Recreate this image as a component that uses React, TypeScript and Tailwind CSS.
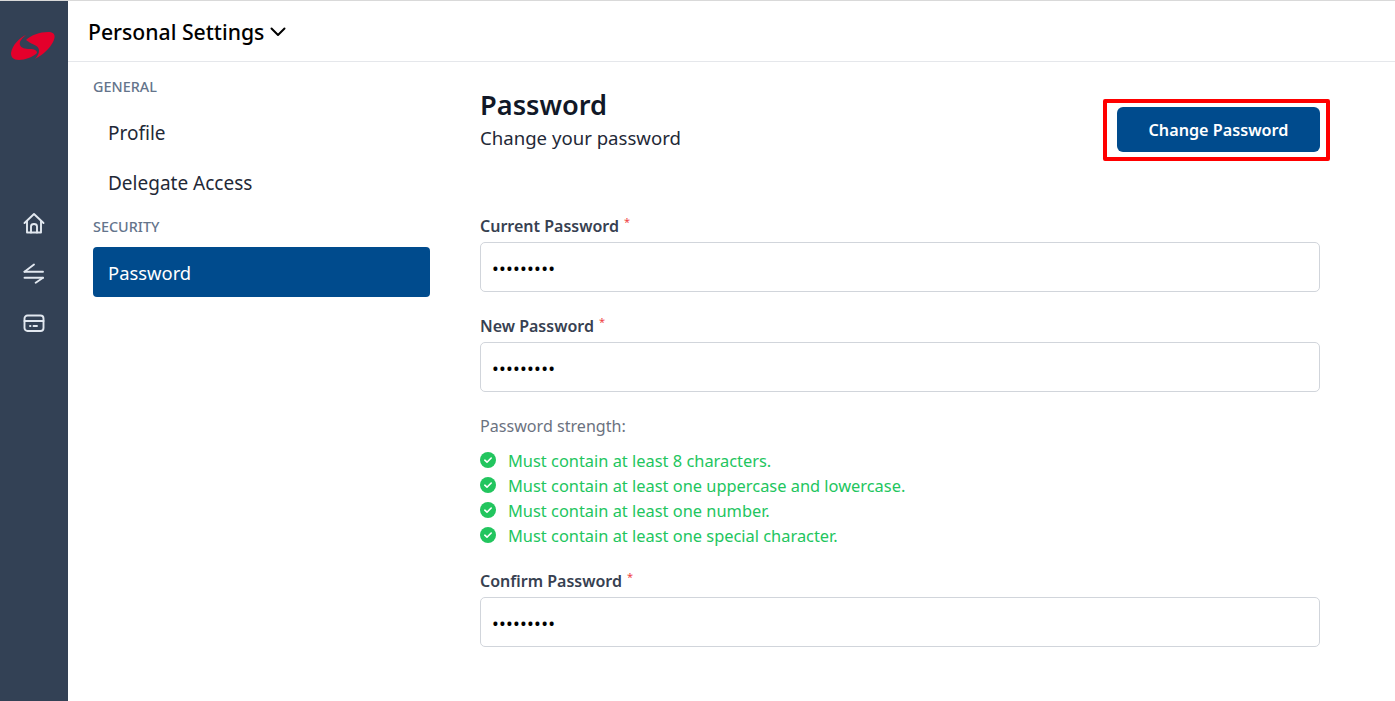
const rules = [
  'Must contain at least 8 characters.',
  'Must contain at least one uppercase and lowercase.',
  'Must contain at least one number.',
  'Must contain at least one special character.',
];

function Logo() {
  return (
    <svg width="44" height="28" viewBox="0 0 44 28" fill="#e4002b">
      <path d="M0 21C1.5 13 8 6 15 3C10 7 8 10 9 13C10 16 14 17 19 17C23 17 26 18 26 21C22 25 14 28 8 28C2 28 0 25 0 21Z" />
      <path d="M15 8C20 3 29 0 37 0C44 0 45 4 42 10C39 16 32 23 24 27C28 23 29 18 27 15.5C25 13 20 12 15 8Z" />
    </svg>
  );
}

function SideIcons() {
  return (
    <div className="mt-[152px] flex flex-col items-center gap-[28px] text-[#e2e8f0]">
      <svg width="22" height="22" viewBox="0 0 22 22" fill="none" stroke="currentColor" strokeWidth="1.9" strokeLinecap="round" strokeLinejoin="round">
        <path d="M1.5 11L11 2L20.5 11" />
        <path d="M4 9V20.5H18V9" />
        <path d="M8 20.5V14.5C8 12.8 9.3 12 11 12C12.7 12 14 12.8 14 14.5V20.5" />
      </svg>
      <svg width="22" height="22" viewBox="0 0 22 22" fill="none" stroke="currentColor" strokeWidth="1.9" strokeLinecap="round" strokeLinejoin="round">
        <path d="M1.5 9.7H20" />
        <path d="M1.5 9.7L11 2.5" />
        <path d="M20 15.7H1.5" />
        <path d="M20 15.7L12.7 20.7" />
      </svg>
      <svg width="22" height="22" viewBox="0 0 22 22" fill="none" stroke="currentColor" strokeWidth="1.9" strokeLinecap="round" strokeLinejoin="round">
        <rect x="1.5" y="3.5" width="19" height="15.5" rx="3" />
        <path d="M1.5 9H20.5" />
        <path d="M7 14H7.5" />
        <path d="M10.5 14H14" />
      </svg>
    </div>
  );
}

function PasswordField({ label }: { label: string }) {
  return (
    <div>
      <div className="flex h-[24px] items-center text-[16px] font-semibold leading-6 text-[#374151]">
        {label}
        <span className="mb-2 ml-[5px] text-[11px] font-normal leading-3 text-[#ef4444]">*</span>
      </div>
      <div className="mt-[4px] flex h-[50px] items-center rounded-[5px] border border-[#d1d5db] bg-white pl-[11px] pt-[2px] text-[18px] tracking-[0.25px] text-black">
        {'•••••••••'}
      </div>
    </div>
  );
}

function CheckDot() {
  return (
    <svg width="16" height="16" viewBox="0 0 16 16" className="shrink-0 -translate-y-[2px]">
      <circle cx="8" cy="8" r="8" fill="#22c55e" />
      <path d="M4.8 8.2L7 10.2L11.2 6" fill="none" stroke="white" strokeWidth="1.6" strokeLinecap="round" strokeLinejoin="round" />
    </svg>
  );
}

export default function App() {
  return (
    <div className="flex h-[701px] w-[1395px] overflow-hidden border-t border-[#d9d9d9] bg-white font-['Noto_Sans','Open_Sans',sans-serif] text-[#111827]">
      <aside className="flex w-[68px] shrink-0 flex-col items-center bg-[#334155]">
        <div className="ml-[-2px] mt-[31px] h-[28px]">
          <Logo />
        </div>
        <SideIcons />
      </aside>

      <div className="flex min-w-0 flex-1 flex-col">
        <header className="flex h-[61px] shrink-0 items-center gap-[6px] border-b border-[#e5e7eb] pl-[20px] pt-[1px] text-[21.2px] font-medium text-black">
          Personal Settings
          <svg width="16" height="10" viewBox="0 0 16 10" fill="none" stroke="currentColor" strokeWidth="2" strokeLinecap="round" strokeLinejoin="round">
            <path d="M1.5 1.5L8 8L14.5 1.5" />
          </svg>
        </header>

        <div className="flex flex-1">
          <nav className="ml-[25px] w-[337px] shrink-0 pt-[13px]">
            <div className="flex h-[24px] items-center text-[14.4px] font-medium text-[#64748b]">GENERAL</div>
            <div className="mt-[9px] flex h-[50px] items-center pl-[15px] text-[19px] text-[#1f2937]">Profile</div>
            <div className="flex h-[50px] items-center pl-[15px] text-[19px] text-[#1f2937]">Delegate Access</div>
            <div className="mt-[7px] flex h-[24px] items-center text-[14.4px] font-medium text-[#64748b]">SECURITY</div>
            <div className="mt-[8px] flex h-[50px] items-center rounded-[4px] bg-[#004b8d] pl-[15px] pt-[1px] text-[18.4px] text-white">Password</div>
          </nav>

          <main className="ml-[50px] w-[840px] shrink-0">
            <div className="flex h-[152px] items-start justify-between">
              <div className="pt-[26px]">
                <h1 className="text-[27.2px] font-semibold leading-[34px] text-[#111827]">Password</h1>
                <p className="pt-[2px] text-[18.6px] leading-[28px] text-[#1f2937]">Change your password</p>
              </div>
              <div className="relative mt-[45px]">
                <button className="flex h-[45px] w-[203px] items-center justify-center rounded-[6px] bg-[#004b8d] pt-[2px] text-[16.2px] font-semibold text-white">
                  Change Password
                </button>
                <div className="absolute -bottom-[9px] -left-[14px] -right-[10px] -top-[8px] rounded-[2px] border-[4px] border-[#ff0000]" />
              </div>
            </div>

            <PasswordField label="Current Password" />
            <div className="mt-[22px]">
              <PasswordField label="New Password" />
            </div>

            <div className="mt-[22px] text-[16.1px] leading-6 text-[#6b7280]">Password strength:</div>
            <ul className="mt-[11px]">
              {rules.map(rule => (
                <li key={rule} className="flex h-[25px] items-center gap-[12px] text-[16.4px] text-[#22c55e]">
                  <CheckDot />
                  {rule}
                </li>
              ))}
            </ul>

            <div className="mt-[20px]">
              <PasswordField label="Confirm Password" />
            </div>
          </main>
        </div>
      </div>
    </div>
  );
}
